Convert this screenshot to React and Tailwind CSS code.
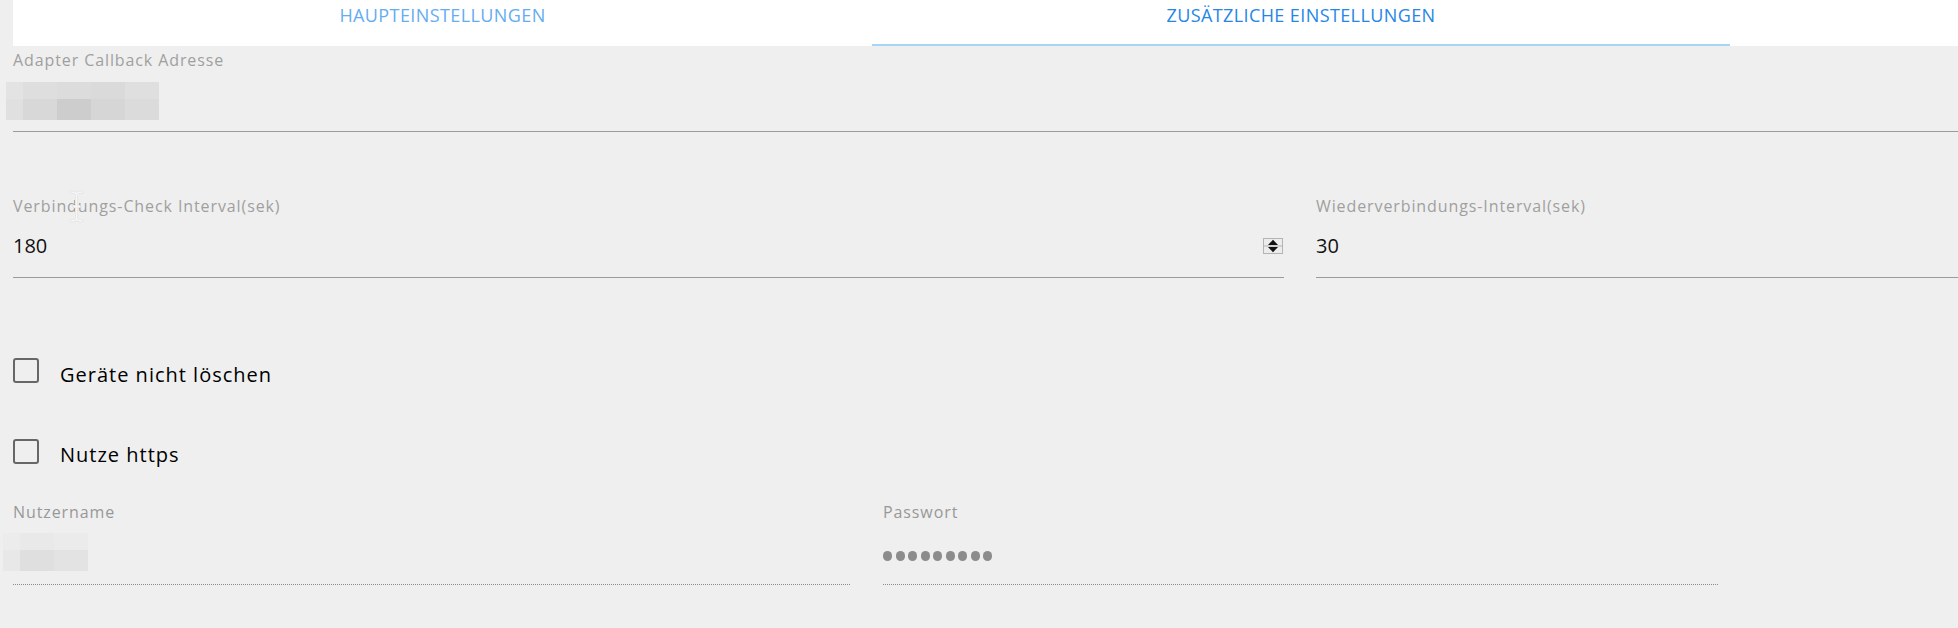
import React from 'react';

const topMosaic = {
  cols: 'grid-cols-[17px_34px_34px_34px_34px]',
  rows: 'grid-rows-[17px_21px]',
  cells: [
    'bg-[#e3e3e3]', 'bg-[#dedede]', 'bg-[#dcdcdc]', 'bg-[#dadada]', 'bg-[#dfdfdf]',
    'bg-[#e0e0e0]', 'bg-[#d8d8d8]', 'bg-[#cdcdcd]', 'bg-[#d6d6d6]', 'bg-[#dbdbdb]',
  ],
};

const userMosaic = {
  cols: 'grid-cols-[17px_34px_34px]',
  rows: 'grid-rows-[17px_21px]',
  cells: [
    'bg-[#ececec]', 'bg-[#e9e9e9]', 'bg-[#ebebeb]',
    'bg-[#e8e8e8]', 'bg-[#dfdfdf]', 'bg-[#e3e3e3]',
  ],
};

const Mosaic = ({ data, className = '' }) => (
  <div className={`grid w-max ${data.cols} ${data.rows} ${className}`}>
    {data.cells.map((c, i) => (
      <div key={i} className={c} />
    ))}
  </div>
);

const Field = ({ label, className = '', labelColor = 'text-[#9f9f9f]', rowClass = 'h-[62px] border-[#9b9b9b]', children }) => (
  <div className={className}>
    <div className={`h-5 text-[16px] leading-5 tracking-[0.9px] whitespace-nowrap ${labelColor}`}>{label}</div>
    <div className={`border-b ${rowClass}`}>{children}</div>
  </div>
);

const Spinner = () => (
  <svg width="20" height="16" viewBox="0 0 20 16" className="mr-[1px]">
    <rect x="0.5" y="0.5" width="19" height="15" fill="#ececec" stroke="#b4b4b4" />
    <line x1="0" y1="8" x2="20" y2="8" stroke="#b4b4b4" />
    <path d="M10 1.8 L15 7 H5 Z" fill="#111" />
    <path d="M10 14.2 L15 9 H5 Z" fill="#111" />
  </svg>
);

const Checkbox = ({ label, textOffset }) => (
  <div className="flex items-start">
    <div className="w-[26px] h-[25px] border-2 border-[#676767] rounded-[3px] shrink-0" />
    <span className={`ml-[21px] ${textOffset} text-[20px] leading-7 tracking-[1px] text-black whitespace-nowrap`}>{label}</span>
  </div>
);

export default function App() {
  return (
    <div className="relative w-[1958px] h-[628px] overflow-hidden bg-[#efefef] font-['Open_Sans',sans-serif]">
      <header className="ml-[13px] h-[46px] bg-white flex">
        <div className="w-[859px] flex justify-center pt-[3px] text-[18px] leading-6 tracking-[0.4px] text-[#64adf0]">
          HAUPTEINSTELLUNGEN
        </div>
        <div className="relative w-[858px] flex justify-center pt-[3px] text-[18px] leading-6 tracking-[0.4px] text-[#2586e6]">
          ZUSÄTZLICHE EINSTELLUNGEN
          <span className="absolute left-0 right-0 bottom-0 h-[2px] bg-[#a7d5f7]" />
        </div>
      </header>

      <div className="pl-[13px] pt-[4px]">
        <Field label="Adapter Callback Adresse">
          <div className="pt-[12px]">
            <Mosaic data={topMosaic} className="ml-[-7px]" />
          </div>
        </Field>
      </div>

      <div className="pl-[13px] mt-[64px] flex">
        <Field label="Verbindungs-Check Interval(sek)" className="w-[1271px]">
          <div className="flex items-center justify-between pt-4">
            <span className="text-[20px] leading-7 text-[#111]">180</span>
            <Spinner />
          </div>
        </Field>
        <Field label="Wiederverbindungs-Interval(sek)" className="ml-[32px] flex-1">
          <div className="pt-4 text-[20px] leading-7 text-[#111]">30</div>
        </Field>
      </div>

      <div className="pl-[13px] mt-[80px]">
        <Checkbox label="Geräte nicht löschen" textOffset="mt-[3px]" />
      </div>
      <div className="pl-[13px] mt-[50px]">
        <Checkbox label="Nutze https" textOffset="mt-[2px]" />
      </div>

      <div className="pl-[13px] mt-[33px] flex">
        <Field
          label="Nutzername"
          className="w-[837px]"
          labelColor="text-[#989898]"
          rowClass="h-[63px] border-dotted border-[#8c8c8c]"
        >
          <div className="pt-[11px]">
            <Mosaic data={userMosaic} className="ml-[-10px]" />
          </div>
        </Field>
        <Field
          label="Passwort"
          className="ml-[33px] w-[835px]"
          labelColor="text-[#989898]"
          rowClass="h-[63px] border-dotted border-[#8c8c8c]"
        >
          <div className="flex gap-[3.5px] pt-[29px]">
            {Array.from({ length: 9 }).map((_, i) => (
              <span key={i} className="w-[9px] h-[10px] rounded-full bg-[#8c8c8c]" />
            ))}
          </div>
        </Field>
      </div>

      {/* mouse I-beam cursor lying over the label */}
      <svg className="absolute left-[67px] top-[190px]" width="19" height="33" viewBox="0 0 19 33">
        <g fill="none" strokeLinecap="round">
          <path d="M4 2 Q9.5 2 9.5 5 Q9.5 2 15 2 M9.5 5 V28 M4 31 Q9.5 31 9.5 28 Q9.5 31 15 31 M6.5 16.5 H12.5" stroke="#e2e2e2" strokeWidth="3" />
          <path d="M4 2 Q9.5 2 9.5 5 Q9.5 2 15 2 M9.5 5 V28 M4 31 Q9.5 31 9.5 28 Q9.5 31 15 31 M6.5 16.5 H12.5" stroke="#f7f7f7" strokeWidth="1.5" />
        </g>
      </svg>
    </div>
  );
}
